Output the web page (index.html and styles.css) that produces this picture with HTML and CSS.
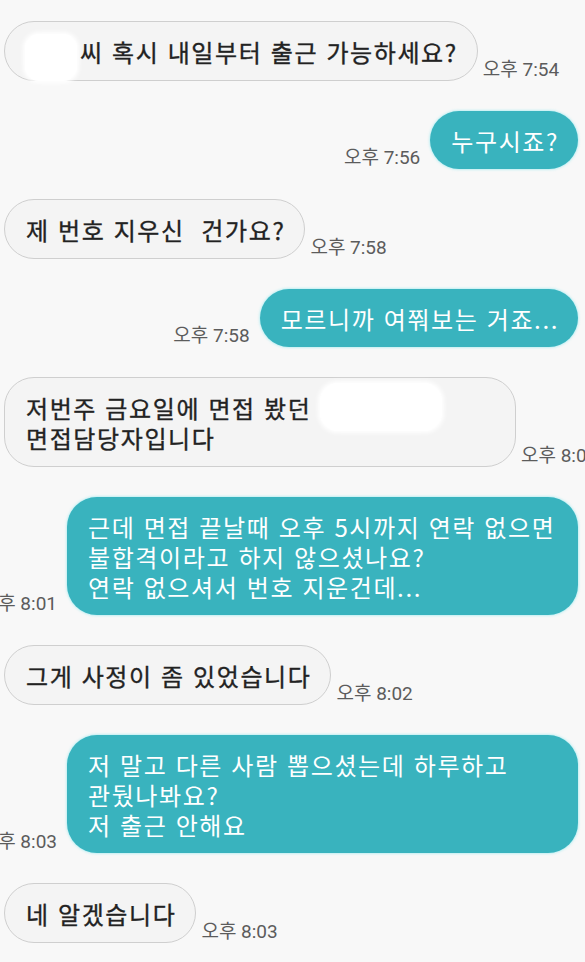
FILE: index.html
```html
<!DOCTYPE html>
<html lang="ko">
<head>
<meta charset="utf-8">
<title>대화</title>
<link rel="stylesheet" href="styles.css">
</head>
<body>
<main class="chat">
  <div class="row in">
    <div class="bubble"><span class="mask mask-name"></span>씨 혹시 내일부터 출근 가능하세요?</div>
    <span class="time">오후 7:54</span>
  </div>
  <div class="row out">
    <span class="time">오후 7:56</span>
    <div class="bubble">누구시죠?</div>
  </div>
  <div class="row in">
    <div class="bubble">제 번호 지우신&nbsp; 건가요?</div>
    <span class="time">오후 7:58</span>
  </div>
  <div class="row out">
    <span class="time">오후 7:58</span>
    <div class="bubble">모르니까 여쭤보는 거죠...</div>
  </div>
  <div class="row in">
    <div class="bubble full">저번주 금요일에 면접 봤던 <span class="mask mask-company"></span><br>면접담당자입니다</div>
    <span class="time">오후 8:01</span>
  </div>
  <div class="row out">
    <span class="time">오후 8:01</span>
    <div class="bubble full">근데 면접 끝날때 오후 5시까지 연락 없으면<br>불합격이라고 하지 않으셨나요?<br>연락 없으셔서 번호 지운건데...</div>
  </div>
  <div class="row in">
    <div class="bubble">그게 사정이 좀 있었습니다</div>
    <span class="time">오후 8:02</span>
  </div>
  <div class="row out">
    <span class="time">오후 8:03</span>
    <div class="bubble full">저 말고 다른 사람 뽑으셨는데 하루하고<br>관뒀나봐요?<br>저 출근 안해요</div>
  </div>
  <div class="row in">
    <div class="bubble">네 알겠습니다</div>
    <span class="time">오후 8:03</span>
  </div>
</main>
</body>
</html>
```

FILE: styles.css
```css
html, body {
  margin: 0;
  padding: 0;
  overflow: hidden;
  background: #f8f8f8;
}

body {
  width: 585px;
  height: 962px;
  font-family: "Noto Sans CJK KR", "Noto Sans", sans-serif;
}

.chat {
  display: flex;
  flex-direction: column;
  gap: 30px;
  padding: 21px 7px 0 4px;
}

.row {
  display: flex;
  align-items: flex-end;
}

.row.in {
  justify-content: flex-start;
  gap: 5px;
}

.row.out {
  justify-content: flex-end;
  gap: 10px;
}

.bubble {
  flex-shrink: 0;
  font-size: 24px;
  line-height: 30px;
  letter-spacing: 1.6px;
  white-space: nowrap;
  border-radius: 30px;
  box-sizing: border-box;
}

.in .bubble {
  background: #f4f4f4;
  border: 1.5px solid #cfcfcf;
  color: #222222;
  font-weight: 400;
  -webkit-text-stroke: 0.35px #222222;
  padding: 15px 19px 13px 21px;
}

.out .bubble {
  background: #39b3be;
  color: #ffffff;
  padding: 15px 19px 13px 21px;
  box-shadow: 0 0 3px rgba(90, 225, 235, 0.7);
}

.in .bubble.full {
  width: 512px;
}

.out .bubble.full {
  width: 511px;
}

.time {
  flex-shrink: 0;
  font-family: Roboto, "Noto Sans CJK KR", sans-serif;
  font-size: 19px;
  line-height: 20px;
  color: #5c5c5c;
  padding-bottom: 1px;
  white-space: nowrap;
}

.mask {
  display: inline-block;
  background: #ffffff;
  vertical-align: top;
  box-shadow: 0 0 4px 2px #ffffff;
}

.mask-name {
  width: 52px;
  height: 47px;
  margin: -3px 3px -14px -1px;
  border-radius: 14px;
}

.mask-company {
  width: 122px;
  height: 48px;
  margin: -10px 0 -8px 0;
  border-radius: 18px;
}
```
